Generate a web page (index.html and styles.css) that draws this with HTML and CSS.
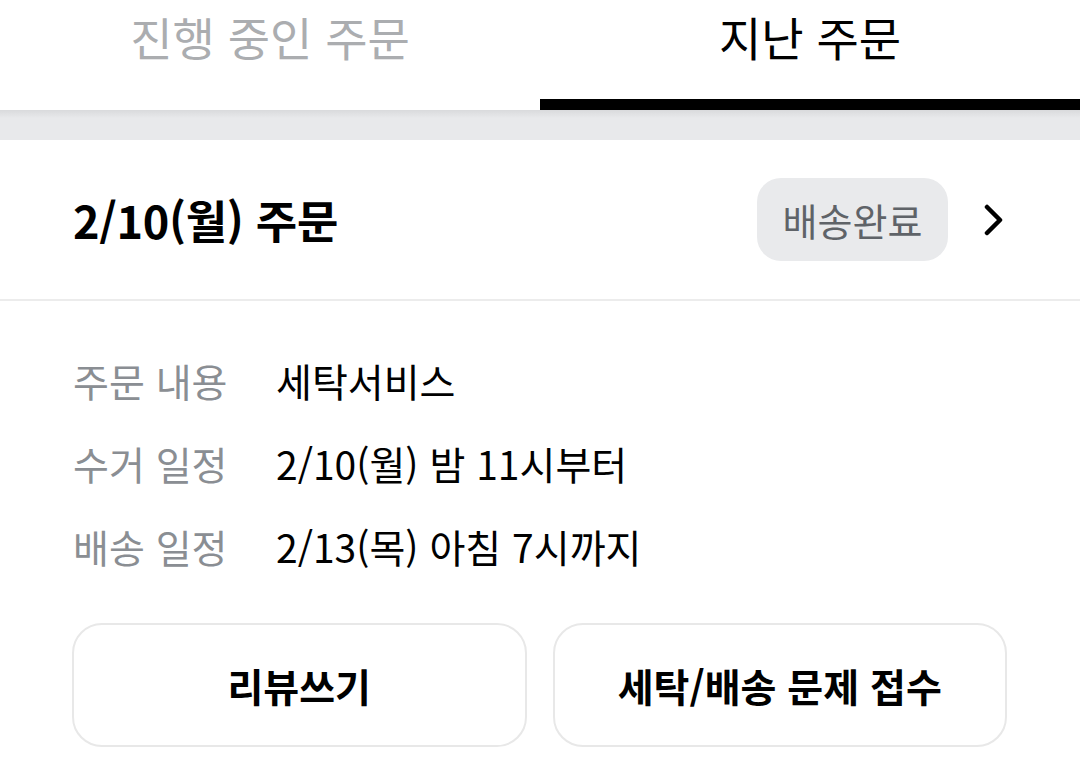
FILE: index.html
```html
<!DOCTYPE html>
<html lang="ko">
<head>
  <meta charset="UTF-8" />
  <meta name="viewport" content="width=device-width, initial-scale=1" />
  <title>주문 내역</title>
  <link rel="stylesheet" href="styles.css">
</head>
<body>
  <div class="tabs">
    <div class="tab">진행 중인 주문</div>
    <div class="tab active">지난 주문</div>
  </div>

  <div class="gap"></div>

  <div class="order">
    <div class="order-head">
      <h2>2/10(월) 주문</h2>
      <div class="status">
        <span class="badge">배송완료</span>
        <svg class="chevron" width="20" height="32" viewBox="0 0 20 32">
          <path d="M3 3 L16 16 L3 29" fill="none" stroke="#000" stroke-width="4.5" stroke-linecap="round" stroke-linejoin="round" />
        </svg>
      </div>
    </div>

    <div class="order-info">
      <div class="row"><span class="label">주문 내용</span><span class="value">세탁서비스</span></div>
      <div class="row"><span class="label">수거 일정</span><span class="value">2/10(월) 밤 11시부터</span></div>
      <div class="row"><span class="label">배송 일정</span><span class="value">2/13(목) 아침 7시까지</span></div>
    </div>

    <div class="actions">
      <button type="button">리뷰쓰기</button>
      <button type="button">세탁/배송 문제 접수</button>
    </div>
  </div>
</body>
</html>
```

FILE: styles.css
```css
/* Global Reset */
* {
  margin: 0;
  padding: 0;
  box-sizing: border-box;
}
body {
  font-family: 'Noto Sans CJK KR', 'Noto Sans', sans-serif;
  background: #fff;
  color: #000;
  width: 1080px;
  height: 780px;
  overflow: hidden;
}
.tabs {
  display: flex;
  height: 110px;
  background: #fff;
}
.tab {
  flex: 1;
  text-align: center;
  font-size: 46px;
  line-height: 46px;
  padding-top: 13px;
  color: #abadb0;
  border-bottom: 11px solid transparent;
}
.tab.active {
  color: #000;
  border-bottom-color: #000;
}
.gap {
  height: 30px;
  background: linear-gradient(#d9dadc, #e8e9eb 8px);
}
.order-head {
  display: flex;
  align-items: center;
  justify-content: space-between;
  height: 161px;
  padding: 0 76px 0 73px;
  border-bottom: 2px solid #ececec;
}
.order-head h2 {
  font-size: 45px;
  font-weight: 700;
  letter-spacing: -0.3px;
}
.status {
  display: flex;
  align-items: center;
  gap: 36px;
}
.badge {
  display: flex;
  align-items: center;
  justify-content: center;
  width: 191px;
  height: 83px;
  border-radius: 24px;
  background: #e9eaec;
  color: #5f6368;
  font-size: 38px;
}
.order-info {
  padding: 37px 73px 0;
}
.row {
  display: flex;
  height: 83px;
  align-items: center;
  font-size: 39px;
}
.label {
  width: 203px;
  color: #8a8e93;
}
.value {
  color: #000;
}
.actions {
  display: flex;
  gap: 26px;
  padding: 36px 73px 0 72px;
}
.actions button {
  flex: 1;
  height: 124px;
  background: #fff;
  border: 2px solid #e8e8e8;
  border-radius: 30px;
  font-family: inherit;
  font-size: 39px;
  font-weight: 700;
  color: #000;
}
```
